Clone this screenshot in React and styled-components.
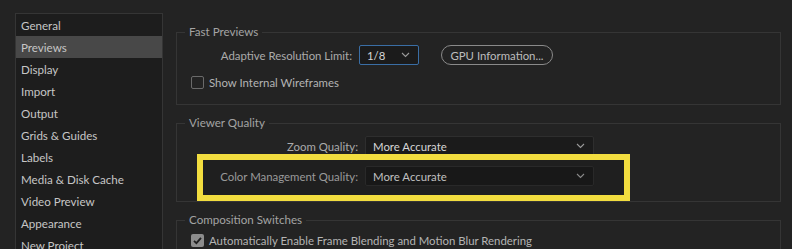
import React from "react";
import styled, { createGlobalStyle } from "styled-components";

const GlobalStyle = createGlobalStyle`
  html, body {
    margin: 0;
    padding: 0;
    background: #232323;
    overflow: hidden;
  }
  body {
    font-family: "Lato", "Noto Sans", sans-serif;
    font-size: 11.4px;
    color: #b4b4b4;
  }
`;

const sections = [
  "General",
  "Previews",
  "Display",
  "Import",
  "Output",
  "Grids & Guides",
  "Labels",
  "Media & Disk Cache",
  "Video Preview",
  "Appearance",
  "New Project",
];

function Chevron() {
  return (
    <svg width="9" height="6" viewBox="0 0 9 6">
      <path d="M1 1 L4.5 4.5 L8 1" fill="none" stroke="#9a9a9a" strokeWidth="1.1" />
    </svg>
  );
}

function Check() {
  return (
    <svg width="11" height="11" viewBox="0 0 11 11">
      <path d="M2 5.8 L4.4 8.2 L9 2.8" fill="none" stroke="#1e1e1e" strokeWidth="1.8" />
    </svg>
  );
}

export default function App() {
  return (
    <>
      <GlobalStyle />
      <Page>
        <Sidebar>
          {sections.map((s) => (
            <NavItem key={s} $active={s === "Previews"}>
              {s}
            </NavItem>
          ))}
        </Sidebar>

        <Content>
          <Group $h={80} $gap={11}>
            <Legend>Fast Previews</Legend>
            <Row>
              <Label $w={182}>Adaptive Resolution Limit:</Label>
              <Select $w={60} $focus>
                <span>1/8</span>
                <Chevron />
              </Select>
              <PillButton>GPU Information...</PillButton>
            </Row>
            <CheckRow>
              <Box />
              <span>Show Internal Wireframes</span>
            </CheckRow>
          </Group>

          <Group $h={86} $gap={10}>
            <Legend>Viewer Quality</Legend>
            <Row>
              <Label $w={188}>Zoom Quality:</Label>
              <Select $w={229}>
                <span>More Accurate</span>
                <Chevron />
              </Select>
            </Row>
            <Row>
              <Label $w={188}>Color Management Quality:</Label>
              <Select $w={229}>
                <span>More Accurate</span>
                <Chevron />
              </Select>
            </Row>
            <Highlight />
          </Group>

          <Group $h={60} $pad={7}>
            <Legend>Composition Switches</Legend>
            <CheckRow>
              <Box $checked>
                <Check />
              </Box>
              <span>Automatically Enable Frame Blending and Motion Blur Rendering</span>
            </CheckRow>
          </Group>
        </Content>
      </Page>
    </>
  );
}

const Page = styled.div`
  display: flex;
  gap: 13px;
  padding: 13px 11px 0 15px;
  height: 249px;
  box-sizing: border-box;
  overflow: hidden;
`;

const Sidebar = styled.div`
  width: 148px;
  flex: none;
  height: 260px;
  box-sizing: border-box;
  background: #1d1d1d;
  border: 1px solid #353535;
`;

const NavItem = styled.div`
  height: 22px;
  line-height: 23px;
  padding-left: 5px;
  font-size: 11.6px;
  color: #c6c6c6;
  background: ${(p) => (p.$active ? "#484848" : "transparent")};
`;

const Content = styled.div`
  flex: 1;
  display: flex;
  flex-direction: column;
  gap: 11px;
  padding-top: 12px;
`;

const Group = styled.fieldset`
  position: relative;
  margin: 0;
  padding: ${(p) => p.$pad || 6}px 0 0 14px;
  height: ${(p) => p.$h}px;
  flex: none;
  box-sizing: border-box;
  border: 1px solid #353535;
  display: flex;
  flex-direction: column;
  gap: ${(p) => p.$gap || 10}px;
`;

const Legend = styled.legend`
  padding: 0 4px;
  margin-left: -6px;
  font-size: 11.6px;
  line-height: 14px;
  color: #a4a4a4;
`;

const Row = styled.div`
  display: flex;
  align-items: center;
  margin-left: -14px;
`;

const Label = styled.div`
  width: ${(p) => p.$w}px;
  flex: none;
  text-align: right;
  padding-right: 7px;
  box-sizing: border-box;
  color: #ababab;
`;

const Select = styled.div`
  width: ${(p) => p.$w}px;
  height: 20px;
  box-sizing: border-box;
  display: flex;
  align-items: center;
  justify-content: space-between;
  padding: 0 8px 0 7px;
  background: #1b1b1b;
  border: 1px solid ${(p) => (p.$focus ? "#3a6ea5" : "#2e2e2e")};
  border-radius: 2px;
  color: #d6d6d6;
`;

const PillButton = styled.div`
  margin-left: 22px;
  width: 112px;
  height: 20px;
  box-sizing: border-box;
  border: 1px solid #8a8a8a;
  border-radius: 10px;
  display: flex;
  align-items: center;
  justify-content: center;
  color: #bdbdbd;
`;

const CheckRow = styled.div`
  display: flex;
  align-items: center;
  gap: 5px;
  color: #b4b4b4;
`;

const Box = styled.div`
  width: 13px;
  height: 13px;
  flex: none;
  box-sizing: border-box;
  border-radius: 2px;
  display: flex;
  align-items: center;
  justify-content: center;
  border: ${(p) => (p.$checked ? "none" : "1.5px solid #6a6a6a")};
  background: ${(p) => (p.$checked ? "#8c8c8c" : "transparent")};
`;

const Highlight = styled.div`
  position: absolute;
  left: 20px;
  top: 24px;
  width: 433px;
  height: 47px;
  box-sizing: border-box;
  border: 6px solid #f2dd3f;
  background: rgba(0, 0, 0, 0.1);
  pointer-events: none;
`;
